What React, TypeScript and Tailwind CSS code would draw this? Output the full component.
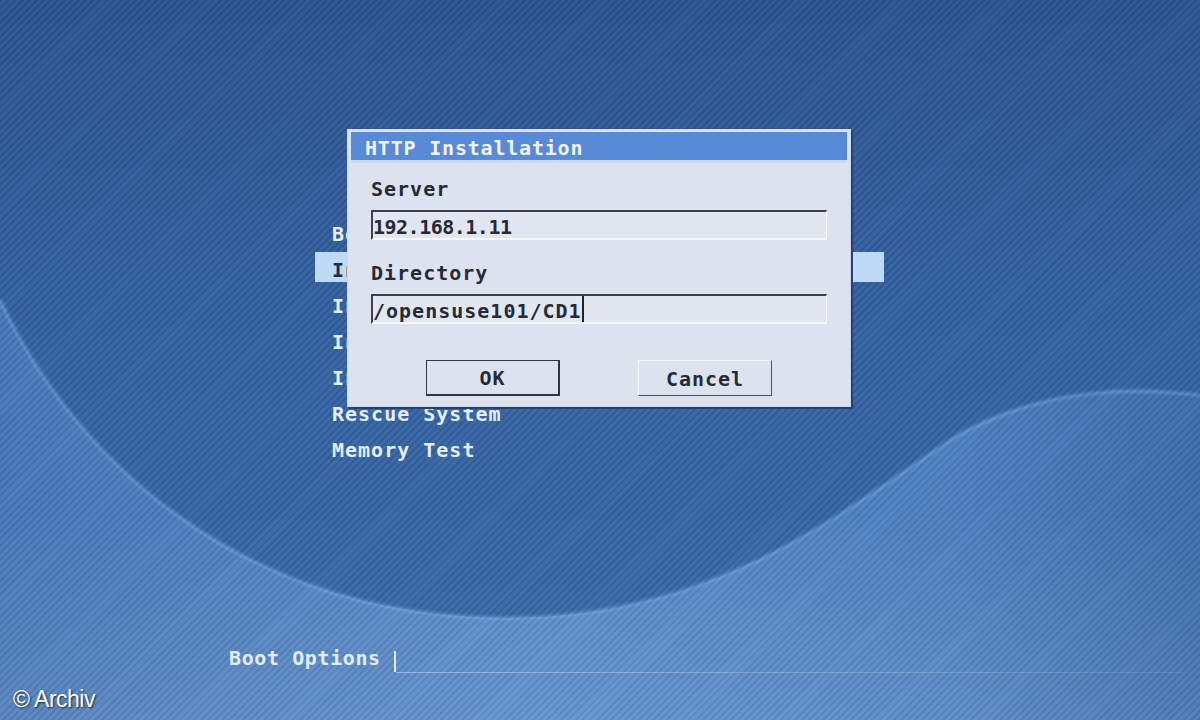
const WAVE = 'M0,300 C80,470 250,615 500,618 C700,620 820,530 950,440 C1050,380 1150,390 1200,395';

const menuItems = [
  'Boot from Hard Disk',
  'Installation',
  'Installation - ACPI Disabled',
  'Installation - Local APIC Disabled',
  'Installation - Safe Settings',
  'Rescue System',
  'Memory Test',
];

function Backdrop() {
  return (
    <>
      <svg className="absolute inset-0 h-full w-full" viewBox="0 0 1200 720" preserveAspectRatio="none">
        <defs>
          <linearGradient id="sky" x1="0" y1="0" x2="0" y2="1">
            <stop offset="0" stopColor="#2c5492" />
            <stop offset="0.45" stopColor="#3462a1" />
            <stop offset="1" stopColor="#3b6bab" />
          </linearGradient>
          <linearGradient id="swell" x1="0" y1="0" x2="1" y2="0">
            <stop offset="0" stopColor="#4778b9" />
            <stop offset="0.45" stopColor="#5689c9" />
            <stop offset="0.8" stopColor="#4d80c0" />
            <stop offset="1" stopColor="#3d6dac" />
          </linearGradient>
          <linearGradient id="swellLift" x1="0" y1="0" x2="0" y2="1">
            <stop offset="0.5" stopColor="#ffffff" stopOpacity="0" />
            <stop offset="1" stopColor="#ffffff" stopOpacity="0.1" />
          </linearGradient>
          <filter id="soft">
            <feGaussianBlur stdDeviation="1.4" />
          </filter>
        </defs>
        <rect width="1200" height="720" fill="url(#sky)" />
        <path d={`${WAVE} L1200,720 L0,720 Z`} fill="url(#swell)" />
        <path d={`${WAVE} L1200,720 L0,720 Z`} fill="url(#swellLift)" />
        <path d={WAVE} fill="none" stroke="#86b6f0" strokeWidth="2.5" opacity="0.6" filter="url(#soft)" />
      </svg>
      {/* fine diagonal hatching over the whole backdrop */}
      <div className="absolute inset-0 bg-[repeating-linear-gradient(135deg,rgba(0,0,0,0.07)_0px,rgba(0,0,0,0.07)_2px,rgba(255,255,255,0.03)_2px,rgba(255,255,255,0.03)_5px)]" />
    </>
  );
}

function Field({ label, value, tracking, cursor }: { label: string; value: string; tracking: string; cursor?: boolean }) {
  return (
    <div className="flex flex-col">
      <div className="h-[24px] leading-[24px] tracking-[1px] text-[#262a36]">{label}</div>
      <div className="mt-[9px] flex h-[30px] border-t-2 border-l-2 border-r border-b-2 border-t-[#3a4052] border-l-[#3a4052] border-r-[#f6f8fc] border-b-[#f6f8fc] bg-[#e1e6f0]">
        <span className={`leading-[30px] text-[#262a36] ${tracking}`}>{value}</span>
        {cursor && <span className="h-full w-[2px] bg-[#1c2230]" />}
      </div>
    </div>
  );
}

function HttpDialog() {
  return (
    <div className="absolute left-[347px] top-[129px] flex w-[504px] flex-col border border-[#c8d6ee] bg-[#dde3ee] px-[3px] pt-[2px] pb-[10px] shadow-[2px_2px_0_#27406e]">
      <div className="h-[28px] bg-[#588ad6] pt-[2px] pl-[14px] leading-[28px] tracking-[0.8px] text-[#f0f4ff]">HTTP Installation</div>
      <div className="h-[3px] bg-[#cbdaf2]" />
      <div className="mt-[14px] flex flex-col gap-[21px] px-[20px]">
        <Field label="Server" value="192.168.1.11" tracking="tracking-[-0.5px]" />
        <Field label="Directory" value="/opensuse101/CD1" tracking="tracking-[1px]" cursor />
      </div>
      <div className="mt-[36px] flex justify-between px-[75px]">
        <button className="h-[36px] w-[134px] border-t border-l border-r-2 border-b-2 border-[#2e3647] pt-[1px] tracking-[1px] text-[#262a36]">
          OK
        </button>
        <button className="h-[36px] w-[134px] border-t border-l border-r border-b border-t-[#f8f9fc] border-l-[#f8f9fc] border-r-[#4a5266] border-b-[#4a5266] pt-[1px] tracking-[1px] text-[#262a36]">
          Cancel
        </button>
      </div>
    </div>
  );
}

export default function App() {
  return (
    <div className="relative flex h-[720px] w-[1200px] flex-col overflow-hidden font-['DejaVu_Sans_Mono',monospace] text-[20px] font-bold">
      <Backdrop />

      <div className="relative flex flex-1 flex-col">
        <ul className="ml-[315px] mt-[216px] flex w-[569px] flex-col gap-[6px]">
          {menuItems.map((item, i) => (
            <li
              key={item}
              className={`h-[30px] whitespace-nowrap pl-[17px] leading-[36px] tracking-[1px] ${
                i === 1 ? 'bg-[#c0d9f6] text-[#1c2c48]' : 'text-[#e6eefc]'
              }`}
            >
              {item}
            </li>
          ))}
        </ul>

        <div className="mt-auto mb-[47px] ml-[229px] mr-[18px] flex h-[27px]">
          <span className="leading-[24px] tracking-[0.6px] text-[#e2ecfb]">Boot Options</span>
          <span className="ml-[13px] mt-[5px] h-[21px] w-[2px] bg-[#dfe8f8]" />
          <span className="h-px flex-1 self-end bg-gradient-to-r from-white/35 to-white/10" />
        </div>
      </div>

      <HttpDialog />

      <div className="absolute left-[13px] top-[686px] font-['Liberation_Sans',Arial,sans-serif] text-[23px] font-normal leading-[26px] tracking-[-0.5px] text-white [text-shadow:1px_1px_2px_rgba(0,0,0,0.7)]">
        © Archiv
      </div>
    </div>
  );
}
